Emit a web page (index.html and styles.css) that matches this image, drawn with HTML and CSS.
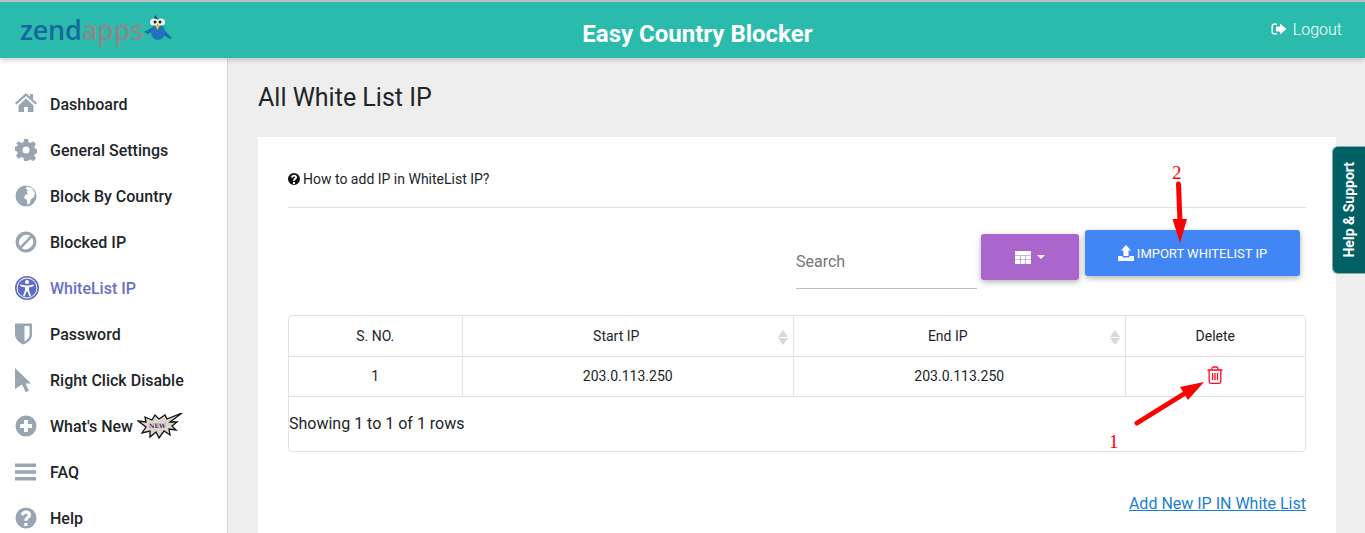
FILE: index.html
```html
<!DOCTYPE html>
<html lang="en">

<head>
  <meta charset="UTF-8">
  <title>Easy Country Blocker</title>
  <link rel="stylesheet" href="styles.css">
</head>

<body>
  <header class="topbar">
    <a class="logo" href="#">
      <span class="logo-zend">zend</span><span class="logo-apps">apps</span>
      <svg class="logo-bird" width="30" height="30" viewBox="0 0 30 30">
        <path d="M1 18 L12 12 L12 16 L5 20 Z" fill="#1a6ea8"/>
        <path d="M19 14 L29 24 L27 25 L17 19 Z" fill="#1a6ea8"/>
        <ellipse cx="15" cy="18" rx="7" ry="8" fill="#1f74bd"/>
        <path d="M12 1 L15 5 L11 5 Z" fill="#14406a"/>
        <ellipse cx="11" cy="8" rx="4" ry="3.6" fill="#f2f2e8"/>
        <ellipse cx="18" cy="8" rx="4" ry="3.6" fill="#f2f2e8"/>
        <circle cx="12" cy="8" r="1.5" fill="#222"/>
        <circle cx="17" cy="8" r="1.5" fill="#222"/>
        <path d="M12 11 L17 11 L14.500 16 Z" fill="#f2c230"/>
      </svg>
    </a>
    <h1 class="app-title">Easy Country Blocker</h1>
    <a class="logout" href="#">
      <svg width="16" height="16" viewBox="0 0 16 16" fill="#fff">
        <path d="M6 2.500H3A2.500 2.500 0 0 0 .5 5v6A2.500 2.500 0 0 0 3 13.500h3V12H3a1 1 0 0 1-1-1V5a1 1 0 0 1 1-1h3Z"/>
        <path d="M9 2.500 15.500 8 9 13.500V10.500H5v-5h4Z"/>
      </svg>
      Logout
    </a>
  </header>

  <div class="layout">
    <aside class="sidebar">
      <a class="nav-item" href="#">
        <svg class="nav-icon" viewBox="1 2 22 24" preserveAspectRatio="xMinYMid"><path d="M12 3 1 13l1.500 1.500L12 6l9.500 8.500L23 13l-4-3.600V4h-3v2.700ZM4.500 15.500V22H10v-5h4v5h5.500v-6.500L12 8.500Z"/></svg>
        Dashboard
      </a>
      <a class="nav-item" href="#">
        <svg class="nav-icon" viewBox="1 0 22 24" preserveAspectRatio="xMinYMid"><path fill-rule="evenodd" d="M10 1h4l.6 3.200 1.900.8 2.700-1.800 2.800 2.800-1.800 2.700.8 1.900 2 .6v4l-2 .6-.8 1.900 1.800 2.700-2.800 2.800-2.700-1.800-1.900.8L14 23h-4l-.6-3.200-1.900-.8-2.700 1.800-2.800-2.800 1.800-2.700-.8-1.900-2-.6v-4l2-.6.8-1.900L1.990 5.990l2.800-2.800 2.700 1.800 1.900-.8ZM12 8.500a3.500 3.500 0 1 0 0 7 3.500 3.500 0 0 0 0-7Z"/></svg>
        General Settings
      </a>
      <a class="nav-item" href="#">
        <svg class="nav-icon" viewBox="1 0 22 24" preserveAspectRatio="xMinYMid"><circle cx="12" cy="12" r="10.500"/><path d="M13 2.500 18 4 21 9 20 13 17 15 16 19 13.500 21 13 16 10 14 11 11 14 10 12.500 7.500 14 6.500 11.500 4.500Z" fill="#fff"/></svg>
        Block By Country
      </a>
      <a class="nav-item" href="#">
        <svg class="nav-icon" viewBox="1 0 22 24" preserveAspectRatio="xMinYMid"><path fill-rule="evenodd" d="M12 1.500a10.500 10.500 0 1 0 0 21 10.500 10.500 0 0 0 0-21ZM6.200 16.200A7.500 7.500 0 0 1 16.200 5.800ZM7.800 18.200 18 7.800a7.500 7.500 0 0 1-10.200 10.400Z"/></svg>
        Blocked IP
      </a>
      <a class="nav-item nav-item-active" href="#">
        <svg class="nav-icon" viewBox="0 0 24 24"><path fill-rule="evenodd" d="M12 0a12 12 0 1 0 0 24 12 12 0 0 0 0-24Zm0 1.600a10.400 10.400 0 1 1 0 20.800 10.400 10.400 0 0 1 0-20.800Z"/><circle cx="12" cy="12" r="9.500"/><path fill="#fff" d="M12 4a2 2 0 1 0 0 4 2 2 0 0 0 0-4ZM5.500 8.500 5 10l5 1.500v2.800L8 20l1.500.5 2-5h1l2 5L16 20l-2-5.700v-2.800l5-1.500-.5-1.500-4.500 1h-4Z"/></svg>
        WhiteList IP
      </a>
      <a class="nav-item" href="#">
        <svg class="nav-icon" viewBox="0 0 22 24" preserveAspectRatio="xMinYMid"><path fill-rule="evenodd" d="M0 1.500h17v11c0 4.500-4 8-8.500 10C4 20.500 0 17 0 12.500ZM9.500 4v15.500c2.500-1.200 5-3.800 5-7V4Z"/></svg>
        Password
      </a>
      <a class="nav-item" href="#">
        <svg class="nav-icon" viewBox="0 0 22 24" preserveAspectRatio="xMinYMid"><path d="M0 0 16 15.500H10.500L14 23 10.500 24 7 16.500 0 21Z"/></svg>
        Right Click Disable
      </a>
      <a class="nav-item" href="#">
        <svg class="nav-icon" viewBox="1 0 22 24" preserveAspectRatio="xMinYMid"><path fill-rule="evenodd" d="M12 1.500a10.500 10.500 0 1 0 0 21 10.500 10.500 0 0 0 0-21Zm-2 4.500h4v4h4v4h-4v4h-4v-4H6v-4h4Z"/></svg>
        What's New
        <span class="new-burst">
          <svg width="46" height="26" viewBox="0 0 46 26">
            <path d="M1 8 9 9 8 4 15 7 18 2 22 6 28 2 30 6 45 0 33 9 40 9 35 13 39 17 32 16 33 22 27 18 22 25 19 19 13 24 13 18 5 20 9 14Z" fill="#ddd6cc" stroke="#111" stroke-width="1.300"/>
            <text x="12" y="15" class="new-text">NEW</text>
          </svg>
        </span>
      </a>
      <a class="nav-item" href="#">
        <svg class="nav-icon" viewBox="1 0 22 24" preserveAspectRatio="xMinYMid"><path d="M1 3.500h21V7H1ZM1 10.250h21v3.500H1ZM1 17h21v3.500H1Z"/></svg>
        FAQ
      </a>
      <a class="nav-item" href="#">
        <svg class="nav-icon" viewBox="1 0 22 24" preserveAspectRatio="xMinYMid"><path fill-rule="evenodd" d="M12 1.500a10.500 10.500 0 1 0 0 21 10.500 10.500 0 0 0 0-21Zm-1.800 15.500h3.400v3h-3.400ZM7 9c0-3 2.400-4.500 5.200-4.500S17 6 17 8.700c0 3.300-3.400 3.300-3.400 6h-3.300c0-4 3.300-4 3.300-5.800 0-1-.6-1.500-1.600-1.500s-1.700.7-1.900 2Z"/></svg>
        Help
      </a>
    </aside>

    <main class="content">
      <h2 class="page-title">All White List IP</h2>

      <section class="card">
        <p class="howto">
          <svg width="12" height="12" viewBox="0 0 24 24" fill="#111"><path fill-rule="evenodd" d="M12 0a12 12 0 1 0 0 24 12 12 0 0 0 0-24Zm-2 18h4v4h-4ZM6 9c0-4 3-5.500 6.200-5.500S18 5.500 18 8.500c0 4-4 4-4 7h-4c0-4.500 4-4.500 4-6.800 0-1-.7-1.700-1.900-1.700S10 7.800 10 9Z"/></svg>
          How to add IP in WhiteList IP?
        </p>

        <div class="toolbar">
          <div class="search">Search</div>
          <button class="btn btn-purple">
            <svg width="16" height="13" viewBox="0 0 16 13" fill="#fff"><path d="M0 0h16v4.200H0ZM0 4.700h5.200v3.800H0ZM5.700 4.700h4.600v3.800H5.700ZM10.800 4.700H16v3.800h-5.200ZM0 9h5.200v4H0ZM5.700 9h4.600v4H5.700ZM10.800 9H16v4h-5.200Z"/></svg>
            <span class="caret"></span>
          </button>
          <button class="btn btn-blue">
            <svg width="16" height="16" viewBox="0 0 16 16" fill="#fff"><path fill-rule="evenodd" d="M8 0 13 5.500H10.500V11H5.500V5.500H3ZM0 11h4.500v1.500h7V11H16v5H0Zm12.500 2.500v1h1v-1Z"/></svg>
            IMPORT WHITELIST IP
          </button>
        </div>

        <div class="table-box">
          <table class="ip-table">
            <thead>
              <tr>
                <th class="col-no">S. NO.</th>
                <th class="col-ip sortable">Start IP</th>
                <th class="col-ip sortable">End IP</th>
                <th>Delete</th>
              </tr>
            </thead>
            <tbody>
              <tr>
                <td>1</td>
                <td>203.0.113.250</td>
                <td>203.0.113.250</td>
                <td>
                  <svg class="trash" width="16" height="18" viewBox="0 0 16 18" fill="none" stroke="#fb0a28" stroke-width="1.300">
                    <path d="M.5 4h15M5 4V2.500q0-1.500 1.500-1.500h3Q11 1 11 2.500V4M2.200 4v11.500q0 1.800 1.800 1.800h8q1.800 0 1.800-1.800V4M5.500 7v7M8 7v7M10.500 7v7"/>
                  </svg>
                </td>
              </tr>
            </tbody>
          </table>
          <p class="rows-info">Showing 1 to 1 of 1 rows</p>
        </div>

        <div class="add-row"><a href="#">Add New IP IN White List</a></div>
      </section>
    </main>
  </div>

  <div class="help-tab">Help &amp; Support</div>

  <svg class="annotations" width="1365" height="533" viewBox="0 0 1365 533">
    <path d="M1178.500 184 1180 222" stroke="#f00" stroke-width="5" stroke-linecap="round"/>
    <path d="M1172.500 219 1187 219 1180 243Z" fill="#f00"/>
    <path d="M1137 423 1187 392" stroke="#f00" stroke-width="5" stroke-linecap="round"/>
    <path d="M1180 387 1204 382 1188 400Z" fill="#f00"/>
    <text x="1172" y="179" class="note">2</text>
    <text x="1109" y="448" class="note">1</text>
  </svg>
</body>

</html>
```

FILE: styles.css
```css
:root {
  --teal: #2bbbad;
  --grey-icon: #98a6b3;
  --text: #212529;
  --line: #dee2e6;
}

* {
  margin: 0;
  padding: 0;
  box-sizing: border-box;
}

html,
body {
  height: 533px;
  overflow: hidden;
}

body {
  font-family: Roboto, sans-serif;
  color: var(--text);
  background-color: #eeeeee;
}

a {
  text-decoration: none;
}

.topbar {
  position: relative;
  z-index: 2;
  height: 58px;
  background-color: var(--teal);
  border-top: 2px solid #b9c4c2;
  box-shadow: 0 2px 5px rgba(0, 0, 0, 0.2);
  display: flex;
  align-items: center;
  padding: 0 23px 0 20px;
}

.logo {
  width: 300px;
  display: flex;
  align-items: center;
  font-family: "Open Sans", sans-serif;
  font-size: 27px;
  font-weight: 600;
  letter-spacing: -0.2px;
  line-height: 1;
  margin-top: -2px;
}

.logo-zend {
  color: #14689c;
}

.logo-apps {
  color: #8a8a8a;
}

.app-title {
  flex: 1;
  text-align: center;
  color: #fff;
  font-size: 24px;
  font-weight: 700;
  margin-right: 196px;
  margin-top: 8px;
}

.logout {
  display: flex;
  align-items: center;
  gap: 6px;
  color: #fff;
  font-size: 16px;
  font-weight: 300;
  margin-top: -2px;
}

.layout {
  display: flex;
  height: 475px;
}

.sidebar {
  width: 228px;
  flex-shrink: 0;
  background-color: #fff;
  border-right: 1px solid #d8d8d8;
  padding: 32px 0 0 15px;
}

.nav-item {
  height: 28px;
  margin-bottom: 18px;
  display: flex;
  align-items: center;
  color: var(--text);
  font-size: 16px;
  font-weight: 500;
}

.nav-icon {
  width: 22px;
  height: 24px;
  fill: var(--grey-icon);
  margin-right: 13px;
  flex-shrink: 0;
}

.nav-item-active {
  color: #6a6fc8;
}

.nav-item-active .nav-icon {
  width: 24px;
  height: 24px;
  margin-right: 11px;
  fill: #5f6cc4;
}

.new-burst {
  display: flex;
  margin-left: 4px;
}

.new-text {
  font-family: "DejaVu Serif", serif;
  font-size: 6px;
  font-weight: 700;
  fill: #4a2a6a;
}

.content {
  flex: 1;
  padding: 23px 29px 0 30px;
}

.page-title {
  font-size: 25px;
  font-weight: 400;
  line-height: 34px;
  margin-bottom: 22px;
}

.card {
  height: 420px;
  background-color: #fff;
  padding: 30px;
}

.howto {
  height: 41px;
  border-bottom: 1px solid #e0e0e0;
  font-size: 14px;
  display: flex;
  align-items: center;
  gap: 3px;
  padding-bottom: 16px;
}

.toolbar {
  height: 107px;
  display: flex;
  padding-top: 22px;
  padding-right: 6px;
  justify-content: flex-end;
}

.search {
  width: 181px;
  height: 59px;
  color: #757575;
  font-size: 16px;
  border-bottom: 1px solid #bdbdbd;
  padding-top: 22px;
  margin-right: 4px;
}

.btn {
  border: none;
  border-radius: 3px;
  color: #fff;
  display: flex;
  align-items: center;
  justify-content: center;
  font-family: Roboto, sans-serif;
  box-shadow: 0 2px 5px rgba(0, 0, 0, 0.2), 0 2px 8px rgba(0, 0, 0, 0.12);
}

.btn-purple {
  width: 98px;
  height: 46px;
  margin-top: 4px;
  margin-right: 6px;
  background-color: #aa66cc;
  gap: 6px;
}

.caret {
  border-top: 4px solid #fff;
  border-left: 4px solid transparent;
  border-right: 4px solid transparent;
}

.btn-blue {
  width: 215px;
  height: 46px;
  background-color: #4285f4;
  font-size: 13px;
  gap: 3px;
}

.table-box {
  height: 137px;
  border: 1px solid var(--line);
  border-radius: 4px;
}

.ip-table {
  width: 100%;
  border-collapse: collapse;
  table-layout: fixed;
  font-size: 14px;
}

.ip-table th,
.ip-table td {
  text-align: center;
  font-weight: 400;
  border-bottom: 1px solid var(--line);
  border-right: 1px solid var(--line);
}

.ip-table th:last-child,
.ip-table td:last-child {
  border-right: none;
}

.ip-table th {
  height: 40px;
}

.ip-table td {
  height: 40px;
}

.col-no {
  width: 173px;
}

.col-ip {
  width: 331.500px;
}

.sortable {
  position: relative;
  padding-right: 23px;
}

.sortable::before,
.sortable::after {
  content: "";
  position: absolute;
  right: 5px;
  border-left: 5px solid transparent;
  border-right: 5px solid transparent;
}

.sortable::before {
  top: 14px;
  border-bottom: 7px solid #d8d8d8;
}

.sortable::after {
  top: 22px;
  border-top: 7px solid #d8d8d8;
}

.trash {
  display: block;
  margin: 0 auto 3px;
}

.rows-info {
  font-size: 16px;
  font-weight: 400;
  padding-top: 17px;
  line-height: 20px;
}

.add-row {
  text-align: right;
  margin-top: 42px;
  font-size: 16px;
}

.add-row a {
  color: #1a7fd4;
  text-decoration: underline;
}

.help-tab {
  position: absolute;
  left: 1332px;
  top: 146px;
  width: 34px;
  height: 128px;
  background-color: #006064;
  border: 1px solid #8aa;
  border-right: none;
  border-radius: 6px 0 0 6px;
  color: #fff;
  font-size: 14px;
  font-weight: 700;
  writing-mode: sideways-lr;
  display: flex;
  align-items: center;
  justify-content: center;
  padding-right: 2px;
}

.annotations {
  position: absolute;
  left: 0;
  top: 0;
  z-index: 3;
  pointer-events: none;
}

.note {
  font-family: "Liberation Serif", serif;
  font-size: 19px;
  fill: #f00;
}
```
